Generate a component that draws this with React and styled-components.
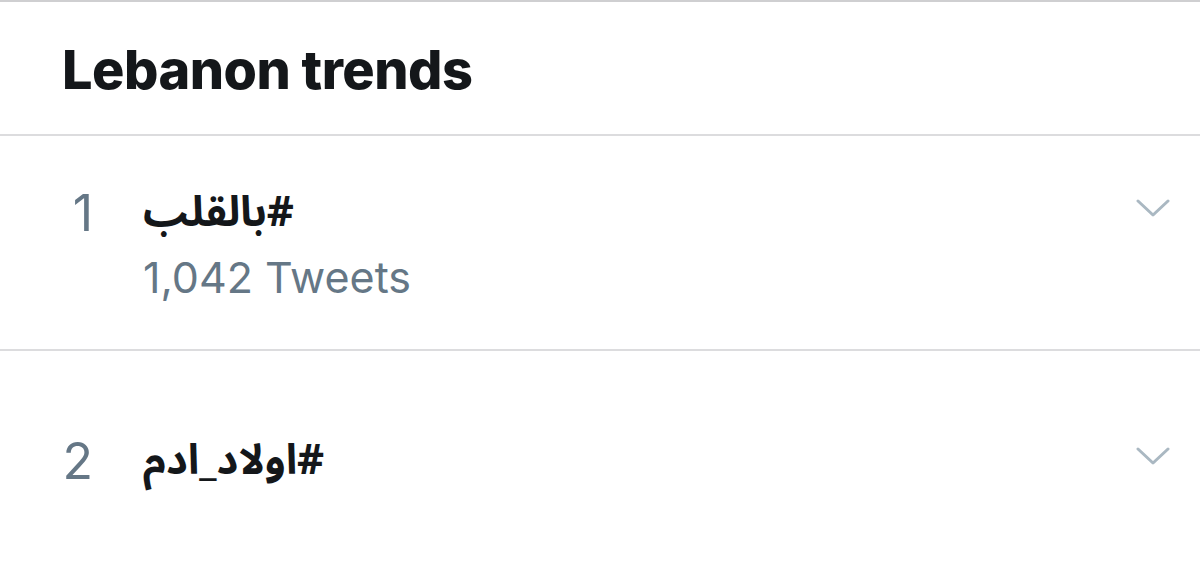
import React from "react";
import styled, { createGlobalStyle } from "styled-components";

const Global = createGlobalStyle`
  body {
    margin: 0;
    background: #ffffff;
    font-family: "Inter", "Roboto", "DejaVu Sans", sans-serif;
  }
`;

const Root = styled.div`
  width: 1200px;
  height: 564px;
  background: #ffffff;
  border-top: 2px solid #cfcfd1;
  box-sizing: border-box;
  overflow: hidden;
`;

const Header = styled.div`
  height: 134px;
  display: flex;
  align-items: center;
  padding-left: 62px;
  border-bottom: 2px solid #dcdcde;
  box-sizing: border-box;
`;

const Title = styled.h1`
  margin: 0;
  font-size: 54px;
  font-weight: 800;
  color: #14171a;
  letter-spacing: -0.5px;
  padding-top: 2px;
`;

const Row = styled.div`
  height: ${(p) => p.h}px;
  display: flex;
  align-items: flex-start;
  padding-top: ${(p) => p.top}px;
  border-bottom: ${(p) => (p.last ? "none" : "2px solid #dcdcde")};
  box-sizing: border-box;
`;

const Rank = styled.div`
  width: 143px;
  box-sizing: border-box;
  padding-right: 50px;
  text-align: right;
  font-size: 50px;
  line-height: 56px;
  color: #657786;
  font-weight: 400;
`;

const Body = styled.div`
  flex: 1;
  display: flex;
  flex-direction: column;
`;

const Tag = styled.div`
  font-family: "Noto Sans Arabic", "Noto Naskh Arabic", "DejaVu Sans", sans-serif;
  font-size: 42px;
  line-height: 56px;
  font-weight: 700;
  color: #14171a;
  direction: rtl;
  text-align: left;
  unicode-bidi: plaintext;
  align-self: flex-start;
`;

const Count = styled.div`
  font-size: 43px;
  line-height: 56px;
  color: #657786;
  margin-top: 8px;
`;

const Chevron = styled.div`
  width: 34px;
  margin-right: 30px;
  padding-top: 13px;
  display: flex;
`;

const ChevronIcon = () => (
  <svg width="34" height="20" viewBox="0 0 34 20" fill="none">
    <path d="M2 3 L17 17 L32 3" stroke="#aab8c2" strokeWidth="3" strokeLinecap="round" strokeLinejoin="round" />
  </svg>
);

const trends = [
  { rank: 1, tag: "#بالقلب", count: "1,042 Tweets" },
  { rank: 2, tag: "#اولاد_ادم" },
];

export default function App() {
  return (
    <Root>
      <Global />
      <Header>
        <Title>Lebanon trends</Title>
      </Header>
      <Row h={215} top={49}>
        <Rank>{trends[0].rank}</Rank>
        <Body>
          <Tag>{trends[0].tag}</Tag>
          <Count>{trends[0].count}</Count>
        </Body>
        <Chevron>
          <ChevronIcon />
        </Chevron>
      </Row>
      <Row h={213} top={82} last>
        <Rank>{trends[1].rank}</Rank>
        <Body>
          <Tag>{trends[1].tag}</Tag>
        </Body>
        <Chevron>
          <ChevronIcon />
        </Chevron>
      </Row>
    </Root>
  );
}
